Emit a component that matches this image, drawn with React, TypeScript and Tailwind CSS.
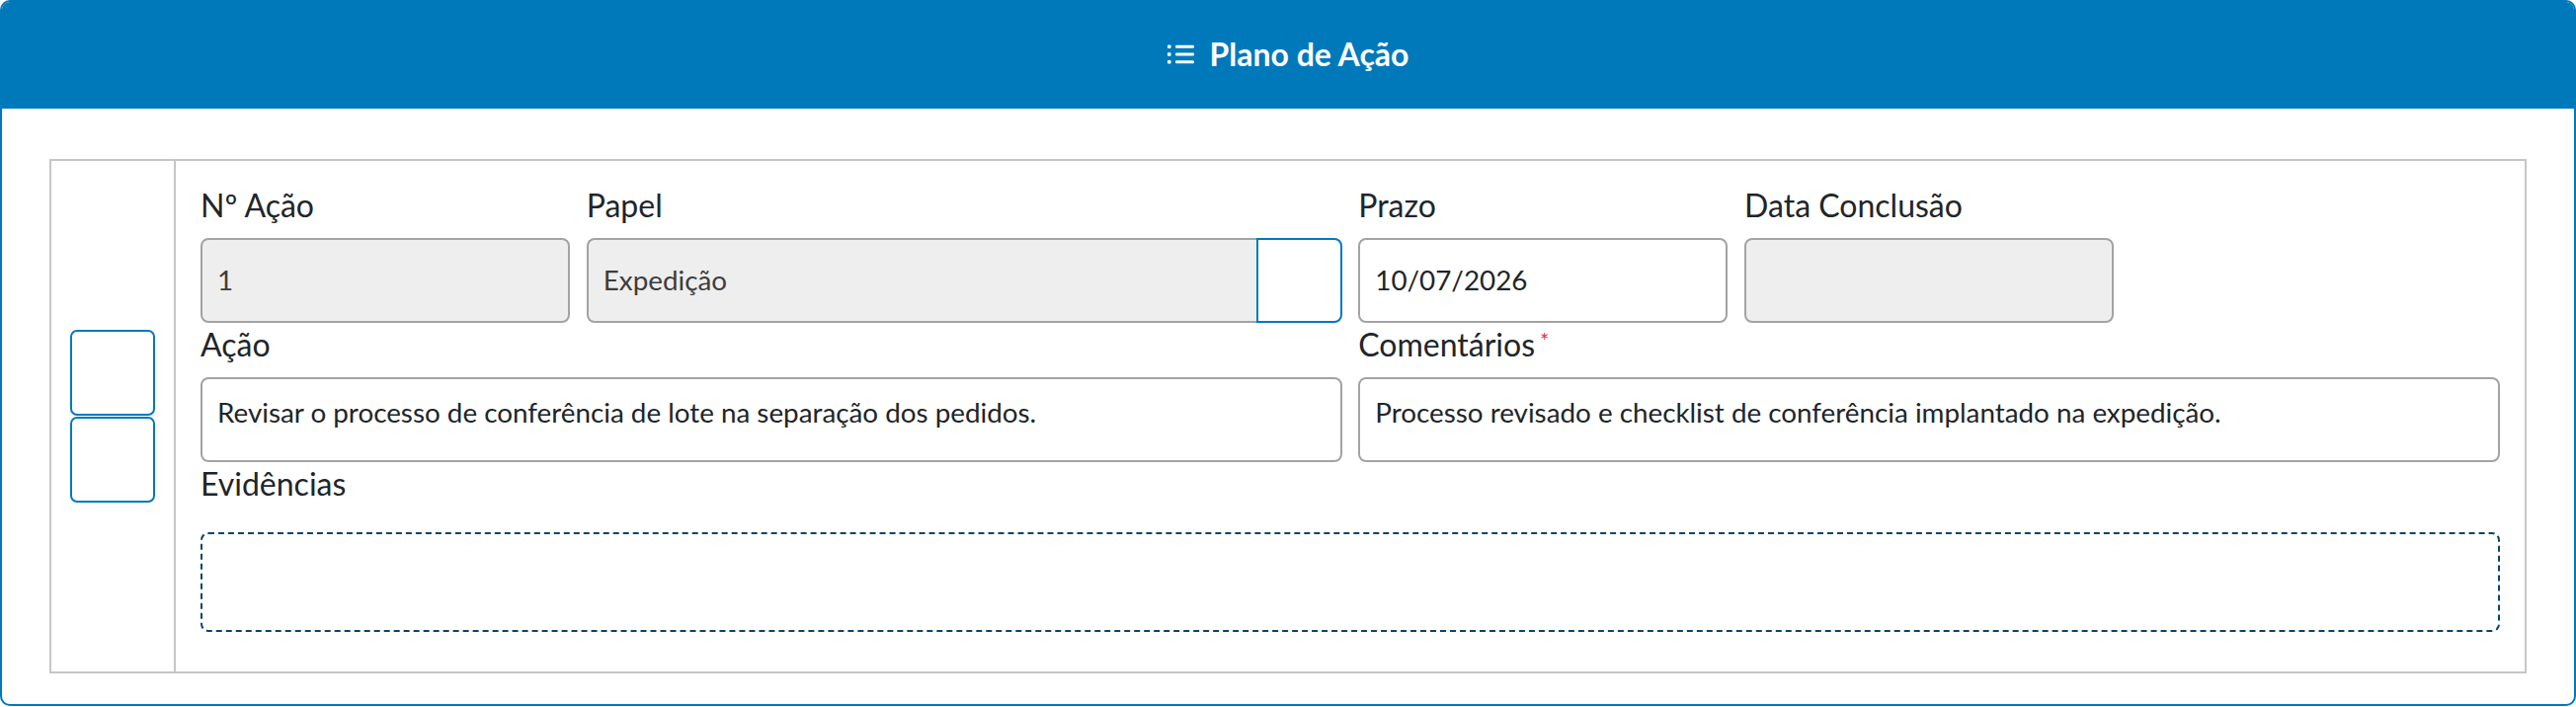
import React from "react";

function ListIcon() {
    return (
        <svg width="27" height="20" viewBox="0 0 27 20" fill="white">
            <rect x="0" y="0.5" width="3.5" height="3.5" rx="0.8" />
            <rect x="0" y="8.2" width="3.5" height="3.5" rx="0.8" />
            <rect x="0" y="16" width="3.5" height="3.5" rx="0.8" />
            <rect x="8" y="0.8" width="19" height="3" rx="1.2" />
            <rect x="8" y="8.5" width="19" height="3" rx="1.2" />
            <rect x="8" y="16.3" width="19" height="3" rx="1.2" />
        </svg>
    );
}

function Label({ children, required }: { children: React.ReactNode; required?: boolean }) {
    return (
        <div className="h-[38px] text-[32px] leading-[38px] text-[#212529] whitespace-nowrap">
            {children}
            {required && (
                <span className="relative top-[-8px] ml-[5px] text-[22px] leading-none text-[#dc3545]">*</span>
            )}
        </div>
    );
}

export default function App() {
    return (
        <div className="w-[2608px] h-[716px] bg-white font-['Lato',sans-serif]">
            <div className="h-[715px] border-2 border-[#0079bb] rounded-[10px] overflow-hidden flex flex-col">
                {/* Header */}
                <div className="h-[108px] bg-[#0079bb] flex items-center justify-center gap-[16px] pb-[2px]">
                    <ListIcon />
                    <span className="text-[32px] font-bold text-white">Plano de Ação</span>
                </div>

                {/* Body */}
                <div className="pt-[51px] px-[48px]">
                    <div className="flex border-2 border-[#c6c6c6]">
                        {/* Left buttons column */}
                        <div className="w-[126px] border-r-2 border-[#c6c6c6] flex flex-col items-center justify-center gap-[1px]">
                            <button className="w-[86px] h-[87px] border-2 border-[#0079bb] rounded-[7px] bg-white"></button>
                            <button className="w-[86px] h-[87px] border-2 border-[#0079bb] rounded-[7px] bg-white"></button>
                        </div>

                        {/* Fields */}
                        <div className="flex-1 px-[25px] pt-[26px] pb-[40px]">
                            <div className="grid grid-cols-12 gap-x-[16.6px]">
                                <div className="col-span-2">
                                    <Label>Nº Ação</Label>
                                    <div className="mt-[14px] h-[86px] border-2 border-[#a3a3a3] rounded-[8px] bg-[#eeeeee] flex items-center px-[15px] text-[27.8px] text-[#3d3d3d]">
                                        1
                                    </div>
                                </div>
                                <div className="col-span-4">
                                    <Label>Papel</Label>
                                    <div className="mt-[14px] h-[86px] flex">
                                        <div className="flex-1 border-2 border-r-0 border-[#a3a3a3] rounded-l-[8px] bg-[#eeeeee] flex items-center px-[15px] text-[27.8px] text-[#3d3d3d]">
                                            Expedição
                                        </div>
                                        <button className="w-[87px] border-2 border-[#0079bb] rounded-r-[8px] bg-white"></button>
                                    </div>
                                </div>
                                <div className="col-span-2">
                                    <Label>Prazo</Label>
                                    <div className="mt-[14px] h-[86px] border-2 border-[#a3a3a3] rounded-[8px] bg-white flex items-center px-[15px] text-[27.8px] text-[#212529]">
                                        10/07/2026
                                    </div>
                                </div>
                                <div className="col-span-2">
                                    <Label>Data Conclusão</Label>
                                    <div className="mt-[14px] h-[86px] border-2 border-[#a3a3a3] rounded-[8px] bg-[#eeeeee]"></div>
                                </div>
                            </div>

                            <div className="grid grid-cols-12 gap-x-[16.6px] mt-[3px]">
                                <div className="col-span-6">
                                    <Label>Ação</Label>
                                    <div className="mt-[14px] h-[86px] border-2 border-[#a3a3a3] rounded-[8px] bg-white px-[15px] pt-[14px] text-[27.8px] leading-[40px] text-[#212529]">
                                        Revisar o processo de conferência de lote na separação dos pedidos.
                                    </div>
                                </div>
                                <div className="col-span-6">
                                    <Label required>Comentários</Label>
                                    <div className="mt-[14px] h-[86px] border-2 border-[#a3a3a3] rounded-[8px] bg-white px-[15px] pt-[14px] text-[27.8px] leading-[40px] text-[#212529]">
                                        Processo revisado e checklist de conferência implantado na expedição.
                                    </div>
                                </div>
                            </div>

                            <div className="mt-[3px]">
                                <Label>Evidências</Label>
                                <div className="mt-[30px] h-[101px] border-2 border-dashed border-[#0a4468] rounded-[8px]"></div>
                            </div>
                        </div>
                    </div>
                </div>
            </div>
        </div>
    );
}
